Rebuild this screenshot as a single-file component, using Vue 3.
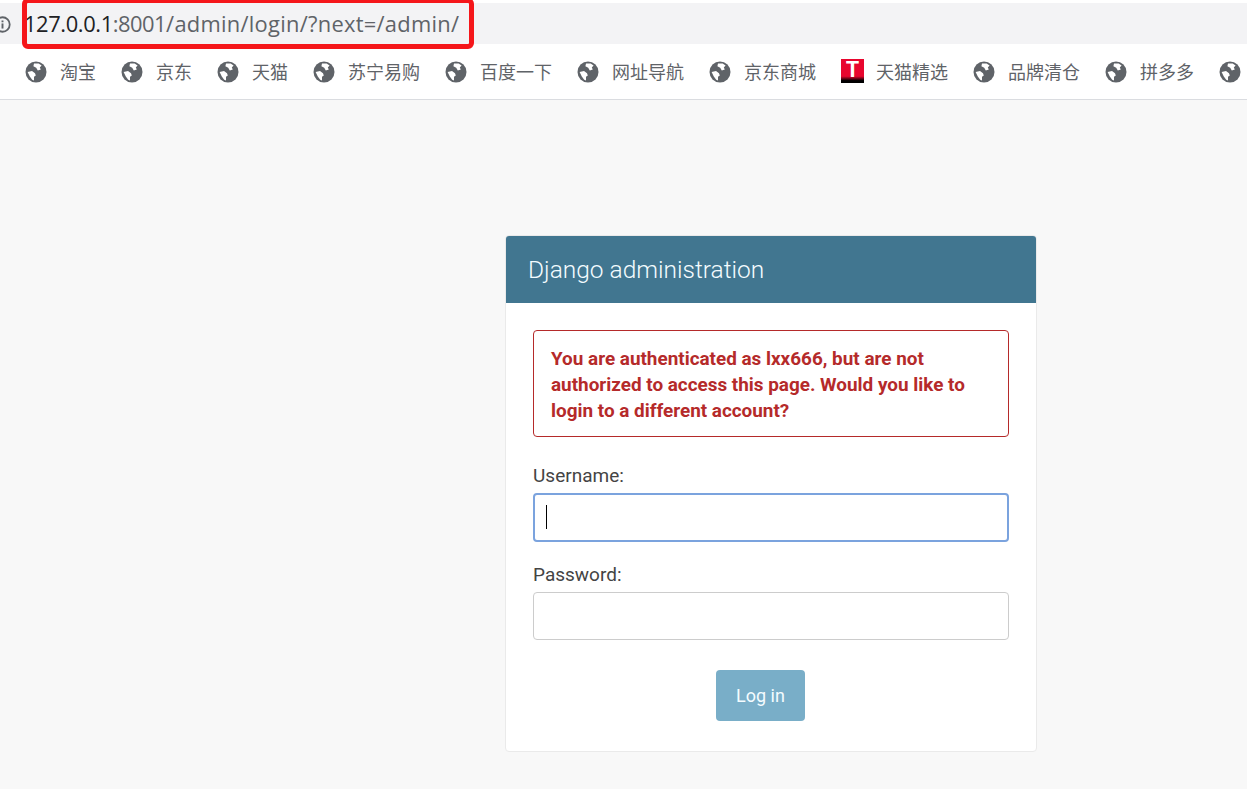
<template>
  <div class="page">
    <div class="address-bar">
      <svg class="info-icon" viewBox="0 0 16 16" width="17" height="17">
        <circle cx="8" cy="8" r="6.8" fill="none" stroke="#5f6368" stroke-width="1.7" />
        <rect x="7.1" y="7" width="1.8" height="4.8" fill="#5f6368" />
        <rect x="7.1" y="4.2" width="1.8" height="1.7" fill="#5f6368" />
      </svg>
      <div class="url"><span class="host">127.0.0.1</span><span class="port">:8001</span><span class="path">/admin/login/?next=/admin/</span></div>
      <div class="annotation"></div>
    </div>

    <div class="bookmarks">
      <div v-for="item in bookmarks" :key="item.name" class="bookmark">
        <div v-if="item.tmall" class="tmall-icon">T</div>
        <svg v-else class="globe" viewBox="0 0 22 22" width="22" height="22">
          <circle cx="11" cy="11" r="10.5" fill="#5f6368" />
          <path d="M9 2.6 L13.6 2.4 L16.6 4.4 L14.8 6.4 L15.8 8.6 L12.8 9.4 L11.2 6.8 L8.4 5.2 Z" fill="#fff" />
          <path d="M2.6 11 L7 10 L10 12.2 L10.8 14.4 L9 15.8 L9 19.4 L7.2 18.8 L4.8 15.4 Z" fill="#fff" />
        </svg>
        <span v-if="item.name" class="bookmark-name">{{ item.name }}</span>
      </div>
    </div>

    <main class="main">
      <div class="login-card">
        <div class="card-header">Django administration</div>
        <div class="card-body">
          <p class="error-note">
            You are authenticated as lxx666, but are not authorized to access this page. Would you like to login to a different account?
          </p>
          <form class="login-form" @submit.prevent>
            <label class="field-label">Username:</label>
            <div class="input-wrap">
              <input class="field-input focused" type="text" />
              <span class="caret"></span>
            </div>
            <label class="field-label second">Password:</label>
            <input class="field-input" type="password" />
            <div class="submit-row">
              <button class="btn-login" type="submit">Log in</button>
            </div>
          </form>
        </div>
      </div>
    </main>
  </div>
</template>

<script setup>
const bookmarks = [
  { name: '淘宝' },
  { name: '京东' },
  { name: '天猫' },
  { name: '苏宁易购' },
  { name: '百度一下' },
  { name: '网址导航' },
  { name: '京东商城' },
  { name: '天猫精选', tmall: true },
  { name: '品牌清仓' },
  { name: '拼多多' },
  { name: '' }
]
</script>

<style>
html,
body {
  margin: 0;
  background: #f8f8f8;
}
</style>

<style scoped>
.page {
  height: 789px;
  overflow: hidden;
  background: #f8f8f8;
  font-family: Roboto, "Noto Sans CJK SC", sans-serif;
}

.address-bar {
  position: relative;
  display: flex;
  align-items: center;
  height: 41px;
  border-top: 3px solid #fff;
  background: #f3f3f5;
  padding-left: 24px;
}

.info-icon {
  position: absolute;
  left: -6px;
  top: 13px;
}

.url {
  font-family: "Open Sans", sans-serif;
  font-size: 21.9px;
  color: #5f6368;
  white-space: nowrap;
}

.host {
  color: #202124;
  letter-spacing: -0.4px;
}

.port {
  letter-spacing: -0.5px;
}

.path {
  letter-spacing: 0.27px;
}

/* red marker drawn over the screenshot */
.annotation {
  position: absolute;
  left: 22px;
  top: -5px;
  box-sizing: border-box;
  width: 452px;
  height: 51px;
  border: 5px solid #f5161a;
  border-radius: 6px;
}

.bookmarks {
  display: flex;
  align-items: center;
  gap: 25px;
  box-sizing: border-box;
  height: 56px;
  padding: 0 0 0 25px;
  background: #fff;
  border-bottom: 1px solid #dadce0;
  overflow: hidden;
}

.bookmark {
  display: flex;
  align-items: center;
  gap: 13px;
  flex-shrink: 0;
  margin-top: -1px;
}

.globe {
  display: block;
  margin-top: 1px;
}

.bookmark-name {
  font-family: "Noto Sans CJK SC", sans-serif;
  font-size: 18px;
  line-height: 24px;
  color: #5f6368;
}

.tmall-icon {
  width: 23px;
  height: 24px;
  margin-right: -1px;
  background: linear-gradient(#e8062e 0 72%, #000 90%);
  color: #fff;
  font: 700 21px/21px Inter, sans-serif;
  text-align: center;
}

.main {
  padding-top: 135px;
}

.login-card {
  box-sizing: border-box;
  width: 532px;
  height: 517px;
  margin-left: 505px;
  background: #fff;
  border: 1px solid #eaeaea;
  border-radius: 4px;
  overflow: hidden;
}

.card-header {
  height: 68px;
  margin: -1px -1px 0;
  padding-left: 23px;
  background: #417690;
  color: #f4fcff;
  font-size: 24.5px;
  font-weight: 300;
  line-height: 70px;
}

.card-body {
  padding: 27px 27px 0;
}

.error-note {
  box-sizing: border-box;
  height: 107px;
  margin: 0;
  padding: 15px 17px;
  border: 1px solid #b52a2a;
  border-radius: 4px;
  color: #b52a2a;
  font-size: 18.9px;
  font-weight: 700;
  line-height: 26px;
}

.login-form {
  display: flex;
  flex-direction: column;
  margin-top: 26px;
}

.field-label {
  height: 30px;
  color: #444;
  font-size: 19px;
  line-height: 25px;
}

.field-label.second {
  margin-top: 20px;
}

.input-wrap {
  position: relative;
}

.field-input {
  display: block;
  box-sizing: border-box;
  width: 100%;
  height: 48px;
  background: #fff;
  border: 1px solid #ccc;
  border-radius: 4px;
  outline: none;
}

.field-input.focused {
  height: 49px;
  border: 2px solid #7ba3de;
}

.caret {
  position: absolute;
  left: 13px;
  top: 12px;
  width: 1px;
  height: 24px;
  background: #000;
}

.submit-row {
  display: flex;
  justify-content: center;
  margin-top: 30px;
}

.btn-login {
  width: 89px;
  height: 51px;
  margin-right: 21px;
  padding: 0;
  background: #79aec8;
  border: none;
  border-radius: 4px;
  color: #f4fcff;
  font-family: Roboto, sans-serif;
  font-size: 18px;
  font-weight: 400;
}
</style>
